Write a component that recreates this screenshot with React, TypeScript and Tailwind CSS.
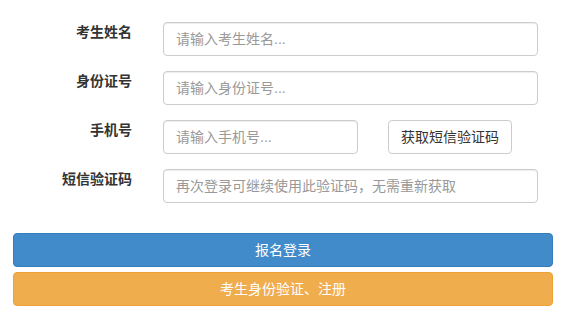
import React from 'react';

const font = { fontFamily: '"Liberation Sans", "Noto Sans CJK SC", sans-serif' };

function Field({ label, placeholder, wide = true, children }: { label: string; placeholder: string; wide?: boolean; children?: React.ReactNode }) {
  return (
    <div className="flex items-start mb-[15px]">
      <label className="w-[132px] shrink-0 text-right text-[14px] leading-[20px] font-bold text-[#333]">{label}</label>
      <input
        className={`ml-[31px] h-[34px] px-3 border border-[#ccc] rounded-[4px] text-[14px] text-[#555] bg-white outline-none shadow-[inset_0_1px_1px_rgba(0,0,0,0.075)] placeholder:text-[#999] ${wide ? 'w-[375px]' : 'w-[195px]'}`}
        placeholder={placeholder}
      />
      {children}
    </div>
  );
}

export default function App() {
  return (
    <div className="w-[566px] h-[315px] bg-white pt-[22px]" style={font}>
      <Field label="考生姓名" placeholder="请输入考生姓名..." />
      <Field label="身份证号" placeholder="请输入身份证号..." />
      <Field label="手机号" placeholder="请输入手机号..." wide={false}>
        <button className="ml-[30px] h-[34px] w-[124px] border border-[#ccc] rounded-[4px] bg-white text-[14px] text-[#333]">
          获取短信验证码
        </button>
      </Field>
      <Field label="短信验证码" placeholder="再次登录可继续使用此验证码，无需重新获取" />
      <div className="mt-[30px] mx-[13px] w-[540px] flex flex-col gap-[5px]">
        <button className="h-[34px] w-full rounded-[4px] border border-[#357ebd] bg-[#428bca] text-white text-[14px]">
          报名登录
        </button>
        <button className="h-[34px] w-full rounded-[4px] border border-[#eea236] bg-[#f0ad4e] text-white text-[14px]">
          考生身份验证、注册
        </button>
      </div>
    </div>
  );
}
